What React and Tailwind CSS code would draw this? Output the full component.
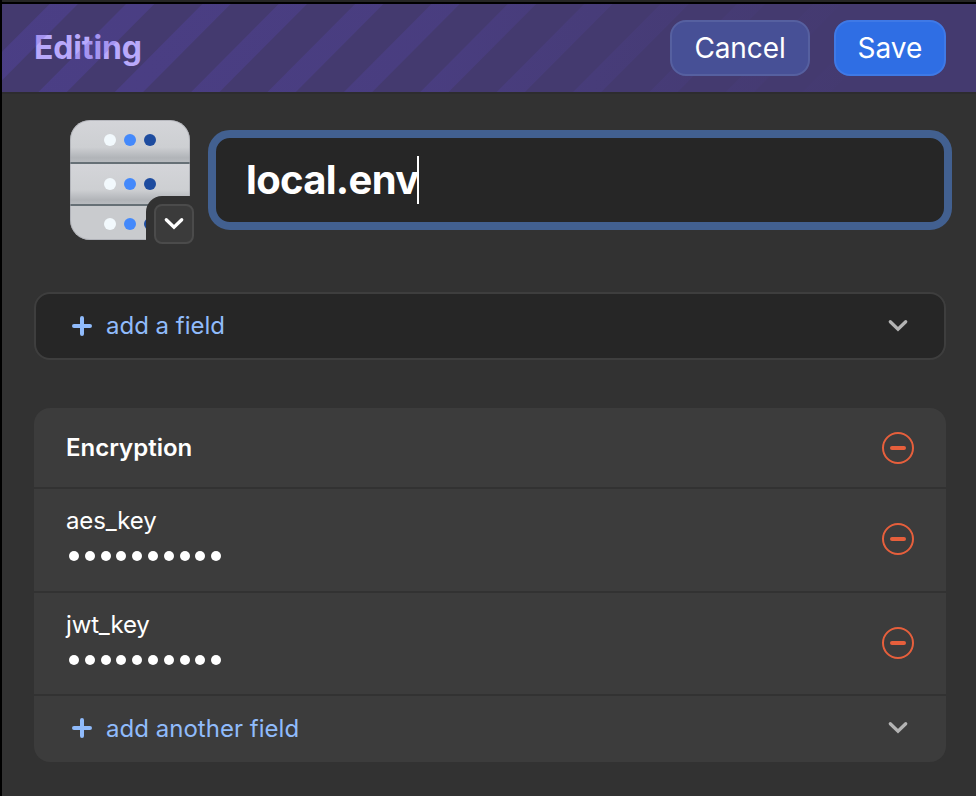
import React from "react";

const STRIPES = Array.from({ length: 13 }, (_, i) => 47.6 + (i - 1) * 76.37);

function Stripes() {
  return (
    <svg className="pointer-events-none absolute inset-0" width="974" height="88" viewBox="0 0 974 88" aria-hidden="true">
      <defs>
        <linearGradient id="stripe-fade" gradientUnits="userSpaceOnUse" x1="0" y1="0" x2="974" y2="0">
          <stop offset="0" stopColor="#5f4cca" stopOpacity="0.24" />
          <stop offset="0.45" stopColor="#5f4cca" stopOpacity="0.18" />
          <stop offset="0.7" stopColor="#5f4cca" stopOpacity="0.07" />
          <stop offset="0.9" stopColor="#5f4cca" stopOpacity="0" />
        </linearGradient>
      </defs>
      {STRIPES.map((x) => (
        <polygon key={x} points={`${x},0 ${x + 28.3},0 ${x - 59.2},88 ${x - 87.5},88`} fill="url(#stripe-fade)" />
      ))}
    </svg>
  );
}

function Chevron({ className }) {
  return (
    <svg width="24" height="24" viewBox="0 0 24 24" className={className} fill="none" stroke="currentColor" strokeWidth="3.3" strokeLinecap="round">
      <path d="M4.3 7.7L12 15.1L19.7 7.7" />
    </svg>
  );
}

function Plus() {
  return (
    <svg width="20" height="20" viewBox="0 0 20 20" fill="none" stroke="currentColor" strokeWidth="4" strokeLinecap="round">
      <path d="M2 10H18M10 2V18" />
    </svg>
  );
}

function RemoveButton() {
  return (
    <button className="flex size-8 items-center justify-center rounded-full border-2 border-[#e65f3c]" aria-label="Remove">
      <span className="h-1 w-4 rounded-full bg-[#e65f3c]" />
    </button>
  );
}

function ServerRow({ cy }) {
  return (
    <g>
      <circle cx="40" cy={cy} r="6" fill="#f2f9fd" />
      <circle cx="60" cy={cy} r="6" fill="#4489fb" />
      <circle cx="80" cy={cy} r="6" fill="#1e4c9f" />
    </g>
  );
}

function ServerIcon() {
  return (
    <svg width="120" height="120" viewBox="0 0 120 120">
      <defs>
        <linearGradient id="bay" x1="0" y1="0" x2="0" y2="1">
          <stop offset="0" stopColor="#d4d5d9" />
          <stop offset="0.65" stopColor="#cdcfd2" />
          <stop offset="0.9" stopColor="#b1b4b8" />
          <stop offset="1" stopColor="#b8bbbf" />
        </linearGradient>
        <clipPath id="server-shape">
          <rect width="120" height="120" rx="20" />
        </clipPath>
      </defs>
      <g clipPath="url(#server-shape)">
        <rect width="120" height="42" fill="url(#bay)" />
        <rect y="44" width="120" height="40" fill="url(#bay)" />
        <rect y="86" width="120" height="34" fill="#c9cbce" />
        <rect y="42" width="120" height="2" fill="#667076" />
        <rect y="84" width="120" height="2" fill="#667076" />
      </g>
      <rect x="0.5" y="0.5" width="119" height="119" rx="19.5" fill="none" stroke="#9a9ba3" strokeOpacity="0.5" />
      <ServerRow cy={20} />
      <ServerRow cy={64} />
      <ServerRow cy={104} />
    </svg>
  );
}

function SecretRow({ name, height }) {
  return (
    <div className={`flex items-start justify-between border-b-2 border-[#323232] px-8 ${height}`}>
      <div className="flex flex-col pt-4">
        <span className="h-8 text-[24px] leading-8 tracking-[-0.15px]">{name}</span>
        <span className="mt-[13.5px] ml-[3px] flex gap-[5.8px]">
          {Array.from({ length: 10 }, (_, i) => (
            <span key={i} className="size-[10px] rounded-full bg-white" />
          ))}
        </span>
      </div>
      <div className="pt-[34px]">
        <RemoveButton />
      </div>
    </div>
  );
}

export default function App() {
  return (
    <div className="h-[796px] w-[976px] overflow-hidden border-l-2 border-black bg-[#323232] font-['Inter',sans-serif] text-white">
      <div className="-ml-0.5 h-1 border-b-2 border-black bg-[#262626]" />
      <header className="relative h-[90px] border-b-2 border-[#2d2c2f] bg-[#443a6f]">
        <div className="flex h-[88px] items-center justify-between pr-[30px] pl-8">
          <h1 className="text-[32px] leading-10 font-bold tracking-[-0.15px] text-[#b9a9fb]">Editing</h1>
          <div className="z-10 flex gap-6">
            <button className="h-14 w-[140px] rounded-2xl border-2 border-[#5660a0] bg-[#475096] text-[28px] tracking-[-0.1px]">Cancel</button>
            <button className="h-14 w-28 rounded-2xl border-2 border-[#3f79e6] bg-[#2f6ee4] text-[28px]">Save</button>
          </div>
        </div>
        <Stripes />
      </header>

      <main className="pr-[30px] pl-8">
        <section className="flex h-[146px] pt-[26px]">
          <div className="relative ml-9 h-[120px] w-[120px]">
            <ServerIcon />
            <div className="absolute top-[76px] left-[76px] rounded-tl-[16px] bg-[#323232] pt-2 pl-2">
              <button className="flex size-10 items-center justify-center rounded-lg border-2 border-[#4b4b4b] bg-[#3b3b3b]" aria-label="Change icon">
                <Chevron className="text-white" />
              </button>
            </div>
          </div>
          <div className="mt-[10px] -mr-1.5 ml-[18px] flex h-[100px] flex-1 items-center rounded-[22px] border-8 border-[#426090] bg-[#262626] pl-[30px]">
            <span className="-mr-px text-[40px] leading-[48px] font-bold tracking-[-0.7px]">local.env</span>
            <span className="h-12 w-0.5 bg-white" />
          </div>
        </section>

        <button className="mt-[52px] flex h-[68px] w-full items-center rounded-2xl border-2 border-[#3e3e3e] bg-[#262626] pr-[34px] pl-9 text-[#90bbfb]">
          <Plus />
          <span className="ml-[14px] text-[24px] leading-8">add a field</span>
          <Chevron className="ml-auto text-[#b3b3b3]" />
        </button>

        <section className="mt-12 h-[354px] overflow-hidden rounded-2xl bg-[#3c3c3c]">
          <div className="flex h-[81px] items-center justify-between border-b-2 border-[#323232] px-8">
            <h2 className="text-[24px] leading-8 font-semibold">Encryption</h2>
            <RemoveButton />
          </div>
          <SecretRow name="aes_key" height="h-[104px]" />
          <SecretRow name="jwt_key" height="h-[103px]" />
          <button className="flex h-16 w-full items-center pr-9 pl-[38px] text-[#90bbfb]">
            <Plus />
            <span className="ml-[14px] pt-px text-[24px] leading-8 tracking-[0.03px]">add another field</span>
            <Chevron className="ml-auto text-[#b3b3b3]" />
          </button>
        </section>
      </main>
    </div>
  );
}
